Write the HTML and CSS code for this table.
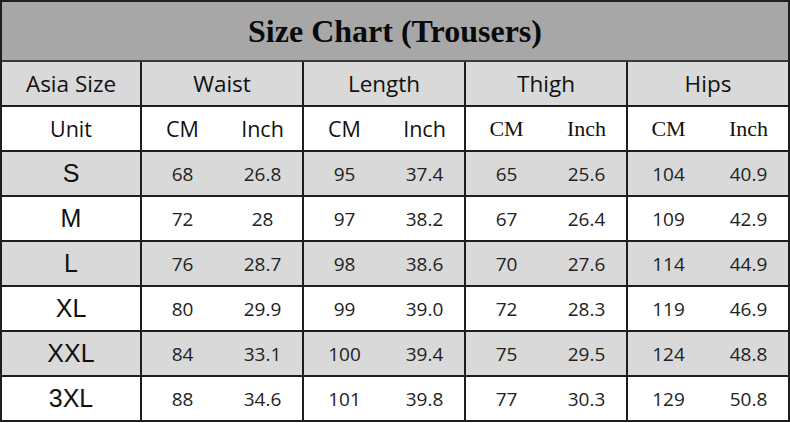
FILE: index.html
```html
<!DOCTYPE html>
<html lang="en">
<head>
<meta charset="utf-8">
<title>Size Chart (Trousers)</title>
<link rel="stylesheet" href="styles.css">
</head>
<body>
<div class="chart">
  <div class="cell title">Size Chart (Trousers)</div>

  <div class="cell head end">Asia Size</div>
  <div class="cell head span2 end">Waist</div>
  <div class="cell head span2 end">Length</div>
  <div class="cell head span2 end">Thigh</div>
  <div class="cell head span2 end">Hips</div>

  <div class="cell unit end">Unit</div>
  <div class="cell unit">CM</div>
  <div class="cell unit end">Inch</div>
  <div class="cell unit">CM</div>
  <div class="cell unit end">Inch</div>
  <div class="cell unit serif">CM</div>
  <div class="cell unit serif end">Inch</div>
  <div class="cell unit serif">CM</div>
  <div class="cell unit serif end">Inch</div>

  <div class="cell size grey end">S</div>
  <div class="cell num grey">68</div><div class="cell num grey end">26.8</div>
  <div class="cell num grey">95</div><div class="cell num grey end">37.4</div>
  <div class="cell num grey">65</div><div class="cell num grey end">25.6</div>
  <div class="cell num grey">104</div><div class="cell num grey end">40.9</div>

  <div class="cell size end">M</div>
  <div class="cell num">72</div><div class="cell num end">28</div>
  <div class="cell num">97</div><div class="cell num end">38.2</div>
  <div class="cell num">67</div><div class="cell num end">26.4</div>
  <div class="cell num">109</div><div class="cell num end">42.9</div>

  <div class="cell size grey end">L</div>
  <div class="cell num grey">76</div><div class="cell num grey end">28.7</div>
  <div class="cell num grey">98</div><div class="cell num grey end">38.6</div>
  <div class="cell num grey">70</div><div class="cell num grey end">27.6</div>
  <div class="cell num grey">114</div><div class="cell num grey end">44.9</div>

  <div class="cell size end">XL</div>
  <div class="cell num">80</div><div class="cell num end">29.9</div>
  <div class="cell num">99</div><div class="cell num end">39.0</div>
  <div class="cell num">72</div><div class="cell num end">28.3</div>
  <div class="cell num">119</div><div class="cell num end">46.9</div>

  <div class="cell size grey end">XXL</div>
  <div class="cell num grey">84</div><div class="cell num grey end">33.1</div>
  <div class="cell num grey">100</div><div class="cell num grey end">39.4</div>
  <div class="cell num grey">75</div><div class="cell num grey end">29.5</div>
  <div class="cell num grey">124</div><div class="cell num grey end">48.8</div>

  <div class="cell size end">3XL</div>
  <div class="cell num">88</div><div class="cell num end">34.6</div>
  <div class="cell num">101</div><div class="cell num end">39.8</div>
  <div class="cell num">77</div><div class="cell num end">30.3</div>
  <div class="cell num">129</div><div class="cell num end">50.8</div>
</div>
</body>
</html>
```
FILE: styles.css
```css
* { box-sizing: border-box; }

html, body {
  margin: 0;
  padding: 0;
  background: #ffffff;
}

.chart {
  width: 790px;
  display: grid;
  grid-template-columns: 140px repeat(8, 81px);
  grid-template-rows: 60px repeat(8, 45px);
  border-left: 2px solid #1e1e1e;
  border-top: 2px solid #1e1e1e;
}

.cell {
  display: flex;
  align-items: center;
  justify-content: center;
  border-bottom: 2px solid #1e1e1e;
  background: #ffffff;
  color: #111111;
  white-space: nowrap;
}

.end { border-right: 2px solid #1e1e1e; }

.title {
  grid-column: 1 / -1;
  background: #a7a7a7;
  border-right: 2px solid #1e1e1e;
  border-bottom: 2px solid #3a3a3a;
  font-family: "Liberation Serif", "Times New Roman", serif;
  font-weight: bold;
  font-size: 32px;
  color: #0a0a0a;
  padding-top: 1px;
}

.head {
  background: #d9d9d9;
  font-family: "Open Sans", "Noto Sans", sans-serif;
  font-size: 22.5px;
  padding-bottom: 1px;
}

.span2 { grid-column: span 2; }

.unit {
  font-family: "Open Sans", "Noto Sans", sans-serif;
  font-size: 21.5px;
}

.unit.serif {
  font-family: "Liberation Serif", "Times New Roman", serif;
  font-size: 22px;
}

.grey { background: #d9d9d9; }

.size {
  font-family: "Liberation Sans", Arial, sans-serif;
  font-size: 25px;
}

.num {
  font-family: "Open Sans", "Noto Sans", sans-serif;
  font-size: 19px;
  color: #222222;
}
```
